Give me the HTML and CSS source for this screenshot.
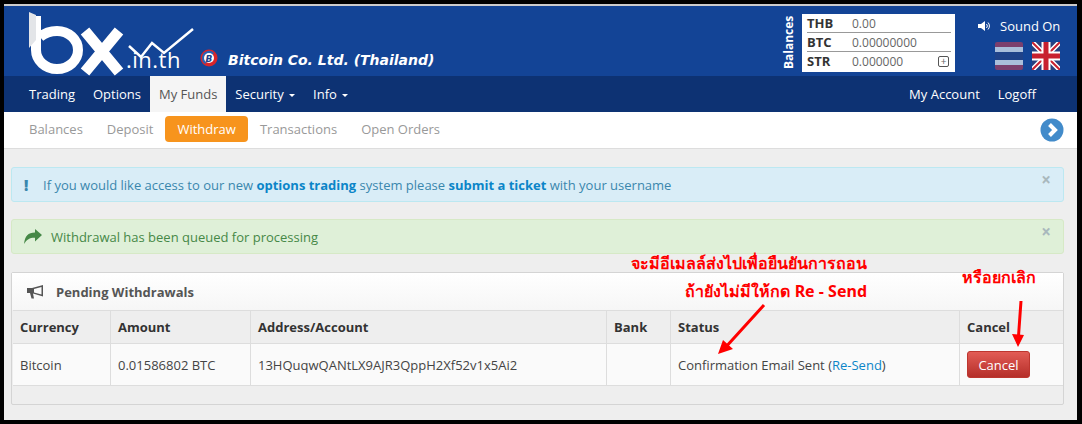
FILE: index.html
```html
<!DOCTYPE html>
<html lang="th">
<head>
  <meta charset="UTF-8">
  <title>BX.in.th - Withdraw</title>
  <link rel="stylesheet" href="styles.css">
</head>
<body>
  <div class="frame">
    <header class="top">
      <div class="brand">
        <svg class="logo" width="175" height="68" viewBox="0 0 175 68">
          <path d="M14 6 V40 A21 19 0 1 0 35 21 A24 20 0 0 0 18 27" fill="none" stroke="#fff" stroke-width="10"/>
          <path d="M14 5 L7 2 V38 L14 30 Z" fill="#e3e5e8"/>
          <path d="M63 21 L97 62 M97 21 L63 62" fill="none" stroke="#fff" stroke-width="11"/>
          <path d="M107 36 L119 47 L130 33 L142 43 L171 19" fill="none" stroke="#fff" stroke-width="2.5"/>
        </svg>
        <span class="domain">.in.th</span>
        <svg class="coin" width="18" height="18" viewBox="0 0 18 18">
          <circle cx="9" cy="9" r="8.5" fill="#d9252a"/>
          <path d="M2 9 A7 7 0 0 1 14 4 L5 15 A7 7 0 0 1 2 9 Z" fill="#2a62b5"/>
          <circle cx="9" cy="9" r="5" fill="#fff"/>
          <text x="9" y="12.5" class="coin-b">B</text>
        </svg>
        <span class="company">Bitcoin Co. Ltd. (Thailand)</span>
      </div>
      <div class="top-right">
        <div class="balances-label">Balances</div>
        <div class="balances">
          <div class="bal-row"><b>THB</b><span>0.00</span></div>
          <div class="bal-row"><b>BTC</b><span>0.00000000</span></div>
          <div class="bal-row"><b>STR</b><span>0.000000</span><i class="plus">+</i></div>
        </div>
        <div class="sound-box">
          <div class="sound">
            <svg width="13" height="12" viewBox="0 0 13 12">
              <path d="M0 4 H3 L7 1 V11 L3 8 H0 Z" fill="#fff"/>
              <path d="M8.5 4 A3 3 0 0 1 8.5 8 M10 2.5 A5 5 0 0 1 10 9.500" fill="none" stroke="#fff"/>
            </svg>
            <span>Sound On</span>
          </div>
          <div class="flags">
            <svg width="28" height="28" viewBox="0 0 28 28">
              <rect width="28" height="28" rx="2" fill="#7b3f6e"/>
              <rect y="5" width="28" height="18" fill="#a9bedb"/>
              <rect y="10" width="28" height="8" fill="#1f4289"/>
            </svg>
            <svg width="28" height="28" viewBox="0 0 28 28">
              <rect width="28" height="28" rx="2" fill="#27407f"/>
              <path d="M0 0 L28 28 M28 0 L0 28" stroke="#fff" stroke-width="5"/>
              <path d="M0 0 L28 28 M28 0 L0 28" stroke="#c8202f" stroke-width="2"/>
              <path d="M14 0 V28 M0 14 H28" stroke="#fff" stroke-width="9"/>
              <path d="M14 0 V28 M0 14 H28" stroke="#c8202f" stroke-width="5"/>
            </svg>
          </div>
        </div>
      </div>
    </header>

    <nav class="mainnav">
      <div class="nav-group">
        <a>Trading</a>
        <a>Options</a>
        <a class="active">My Funds</a>
        <a>Security <i class="caret"></i></a>
        <a>Info <i class="caret"></i></a>
      </div>
      <div class="nav-group">
        <a>My Account</a>
        <a>Logoff</a>
      </div>
    </nav>

    <div class="subnav">
      <div class="pills">
        <a>Balances</a>
        <a>Deposit</a>
        <a class="active">Withdraw</a>
        <a>Transactions</a>
        <a>Open Orders</a>
      </div>
      <svg class="next" width="24" height="24" viewBox="0 0 24 24">
        <circle cx="12" cy="12" r="11.500" fill="#428bca"/>
        <path d="M9.500 6.500 L15 12 L9.500 17.500" fill="none" stroke="#fff" stroke-width="4"/>
      </svg>
    </div>

    <main class="content">
      <div class="alert alert-info">
        <span class="alert-icon bang">!</span>
        <span>If you would like access to our new <b>options trading</b> system please <b>submit a ticket</b> with your username</span>
        <span class="close">×</span>
      </div>

      <div class="alert alert-success">
        <svg class="alert-icon" width="18" height="15" viewBox="0 0 18 15">
          <path d="M18 6 L11 0 V3.500 C4 3.500 1 7 0 15 C3 10 6 8.500 11 8.700 V12.500 Z" fill="#468847"/>
        </svg>
        <span>Withdrawal has been queued for processing</span>
        <span class="close">×</span>
      </div>

      <section class="panel">
        <div class="panel-head">
          <svg width="18" height="15" viewBox="0 0 18 15">
            <path d="M17 1 L6 4 H1 V9 H4 L5.500 14.500 H8 L7 9.500 L17 12.500 Z M15.500 3 V10.500 L8 8.500 V5 Z" fill="#555" fill-rule="evenodd"/>
          </svg>
          <h2>Pending Withdrawals</h2>
        </div>
        <div class="table-wrap">
          <table>
            <thead>
              <tr>
                <th class="c-cur">Currency</th>
                <th class="c-amt">Amount</th>
                <th class="c-addr">Address/Account</th>
                <th class="c-bank">Bank</th>
                <th class="c-status">Status</th>
                <th>Cancel</th>
              </tr>
            </thead>
            <tbody>
              <tr>
                <td>Bitcoin</td>
                <td>0.01586802 BTC</td>
                <td>13HQuqwQANtLX9AJR3QppH2Xf52v1x5Ai2</td>
                <td></td>
                <td>Confirmation Email Sent (<a>Re-Send</a>)</td>
                <td><button class="btn-cancel">Cancel</button></td>
              </tr>
            </tbody>
          </table>
        </div>
      </section>

      <div class="note note-send">จะมีอีเมลล์ส่งไปเพื่อยืนยันการถอน<br>ถ้ายังไม่มีให้กด Re - Send</div>
      <div class="note note-cancel">หรือยกเลิก</div>
      <svg class="arrows" width="1082" height="424" viewBox="0 0 1082 424">
        <path d="M764 305 L724 349 M1021 301 L1018 343" stroke="#f00" stroke-width="3" fill="none"/>
        <path d="M718 354 L733 349 L723 340 Z M1018 347 L1012 334 L1024 335 Z" fill="#f00"/>
      </svg>
    </main>
  </div>
</body>
</html>
```

FILE: styles.css
```css
html,
body {
  margin: 0;
  height: 424px;
  overflow: hidden;
  background: #000;
}

body {
  font-family: "Open Sans", Arial, sans-serif;
  font-size: 13px;
  color: #444;
}

.frame {
  position: relative;
  width: 1073px;
  height: 416px;
  margin: 4px 0 0 4px;
  background: #eee;
  display: flex;
  flex-direction: column;
}

/* header */
.top {
  height: 72px;
  box-sizing: border-box;
  border-top: 2px solid #ccc;
  background: #134496;
  display: flex;
  justify-content: space-between;
}

.brand {
  position: relative;
  flex: 1;
}

.logo {
  position: absolute;
  left: 18px;
  top: 4px;
}

.domain {
  position: absolute;
  left: 122px;
  top: 39px;
  font-family: "Open Sans", sans-serif;
  font-size: 22px;
  line-height: 28px;
  letter-spacing: 0.5px;
  color: #fff;
}

.coin {
  position: absolute;
  left: 196px;
  top: 43px;
}

.coin-b {
  font-family: "DejaVu Sans", sans-serif;
  font-size: 9px;
  font-weight: bold;
  font-style: italic;
  text-anchor: middle;
  fill: #1f4289;
}

.company {
  position: absolute;
  left: 224px;
  top: 45px;
  font-family: "DejaVu Sans", sans-serif;
  font-size: 14px;
  font-weight: bold;
  font-style: italic;
  line-height: 18px;
  color: #fff;
}

.top-right {
  display: flex;
  align-items: flex-start;
}

.balances-label {
  writing-mode: vertical-rl;
  transform: rotate(180deg);
  margin-top: 7px;
  width: 15px;
  height: 58px;
  font-size: 12px;
  font-weight: 700;
  line-height: 15px;
  text-align: center;
  color: #fff;
}

.balances {
  width: 153px;
  height: 58px;
  margin: 8px 0 0 6px;
  box-sizing: border-box;
  padding: 0 4px 0 5px;
  background: #fff;
}

.bal-row {
  position: relative;
  height: 19px;
  box-sizing: border-box;
  border-bottom: 1px solid #999;
  font-size: 12px;
  line-height: 19px;
  display: flex;
  color: #666;
}

.bal-row:last-child {
  border-bottom: 0;
}

.bal-row b {
  width: 45px;
  font-size: 13px;
  color: #333;
}

.plus {
  position: absolute;
  right: 2px;
  top: 4px;
  width: 9px;
  height: 9px;
  border: 1px solid #555;
  border-radius: 2px;
  font-size: 10px;
  font-style: normal;
  line-height: 9px;
  text-align: center;
}

.sound-box {
  width: 122px;
  box-sizing: border-box;
  padding: 11px 0 0 23px;
}

.sound {
  display: flex;
  align-items: center;
  gap: 9px;
  height: 18px;
  color: #fff;
}

.flags {
  display: flex;
  gap: 9px;
  margin: 7px 0 0 17px;
}

/* main nav */
.mainnav {
  height: 36px;
  padding: 0 32px 0 16px;
  background: #0d3273;
  display: flex;
  justify-content: space-between;
}

.nav-group {
  display: flex;
}

.nav-group a {
  padding: 0 9px;
  line-height: 36px;
  color: #fff;
}

.nav-group a.active {
  background: #f5f5f5;
  color: #555;
}

.caret {
  display: inline-block;
  margin-left: 2px;
  vertical-align: middle;
  border-top: 3px solid #fff;
  border-left: 3px solid transparent;
  border-right: 3px solid transparent;
}

/* sub nav */
.subnav {
  height: 37px;
  box-sizing: border-box;
  padding: 4px 13px 0 13px;
  border-bottom: 1px solid #ddd;
  background: #fff;
  display: flex;
  justify-content: space-between;
  align-items: flex-start;
}

.pills {
  display: flex;
}

.pills a {
  padding: 0 12px;
  line-height: 26px;
  color: #999;
}

.pills a.active {
  border-radius: 4px;
  background: #f7941d;
  color: #fff;
}

.next {
  margin-top: 2px;
}

/* content */
.content {
  flex: 1;
  padding: 18px 13px 0 7px;
}

.alert {
  position: relative;
  height: 35px;
  box-sizing: border-box;
  margin-bottom: 17px;
  padding: 0 10px 0 12px;
  border: 1px solid;
  border-radius: 3px;
  display: flex;
  align-items: center;
}

.alert-info {
  border-color: #bce8f1;
  background: #d9edf7;
  color: #3a87ad;
}

.alert-info b {
  color: #0b85c8;
}

.alert-success {
  border-color: #d6e9c6;
  background: #dff0d8;
  color: #468847;
}

.alert-icon {
  width: 18px;
  margin-right: 9px;
}

.bang {
  width: 10px;
  font-size: 15px;
  font-weight: 800;
}

.close {
  position: absolute;
  right: 12px;
  top: 2px;
  font-size: 17px;
  font-weight: 700;
  line-height: 20px;
  color: #a9b8bd;
}

.panel {
  margin-top: 18px;
  height: 133px;
  box-sizing: border-box;
  border: 1px solid #d4d4d4;
  border-radius: 2px;
  background: #eee;
  padding-left: 1px;
}

.panel-head {
  height: 37px;
  margin-left: -1px;
  padding-left: 14px;
  background: linear-gradient(#fff, #f6f6f6);
  display: flex;
  align-items: center;
  gap: 12px;
}

.panel-head h2 {
  margin: 0;
  font-size: 13px;
  font-weight: 700;
  color: #555;
}

.table-wrap {
  border-top: 1px solid #ddd;
}

table {
  width: 100%;
  border-collapse: collapse;
  table-layout: fixed;
}

th,
td {
  padding: 0 7px;
  border-left: 1px solid #ddd;
  text-align: left;
}

th:first-child,
td:first-child {
  border-left: 0;
}

th {
  height: 32px;
  border-bottom: 1px solid #ddd;
  background: #eee;
  font-weight: 700;
  color: #333;
}

td {
  height: 41px;
  border-bottom: 1px solid #ddd;
  background: #fafafa;
}

td a {
  color: #0b85c8;
}

.c-cur { width: 83px; }
.c-amt { width: 125px; }
.c-addr { width: 341px; }
.c-bank { width: 49px; }
.c-status { width: 274px; }

.btn-cancel {
  display: block;
  width: 63px;
  height: 27px;
  padding: 0;
  border: 1px solid #bd362f;
  border-radius: 3px;
  background: linear-gradient(#e25c55, #b52f2a);
  font-family: inherit;
  font-size: 13px;
  color: #fff;
}

/* notes drawn over the screenshot */
.note {
  position: absolute;
  font-family: "Noto Sans", "DejaVu Sans", sans-serif;
  font-size: 16px;
  font-weight: 700;
  line-height: 28px;
  text-align: right;
  color: #f00;
}

.note-send {
  right: 210px;
  top: 245px;
}

.note-cancel {
  right: 41px;
  top: 259px;
}

.arrows {
  position: absolute;
  left: -4px;
  top: -4px;
  pointer-events: none;
}
```
